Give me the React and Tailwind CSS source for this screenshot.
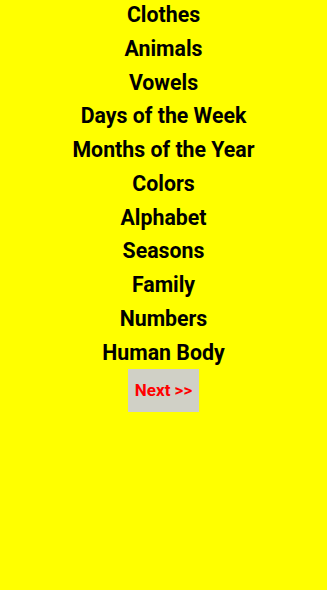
import React from 'react';

const topics = [
  'Clothes',
  'Animals',
  'Vowels',
  'Days of the Week',
  'Months of the Year',
  'Colors',
  'Alphabet',
  'Seasons',
  'Family',
  'Numbers',
  'Human Body',
];

export default function App() {
  return (
    <div className="min-h-[592px] w-full bg-[#ffff00] font-['Roboto',sans-serif]">
      <div className="-mt-[2px] flex flex-col items-center">
        {topics.map((t) => (
          <div key={t} className="text-[21.3px] font-bold leading-[33.75px] text-black">
            {t}
          </div>
        ))}
        <button className="h-[43px] w-[71px] bg-[#d0d0c6] text-[17px] font-bold text-[#ff0000]">
          Next &gt;&gt;
        </button>
      </div>
    </div>
  );
}
